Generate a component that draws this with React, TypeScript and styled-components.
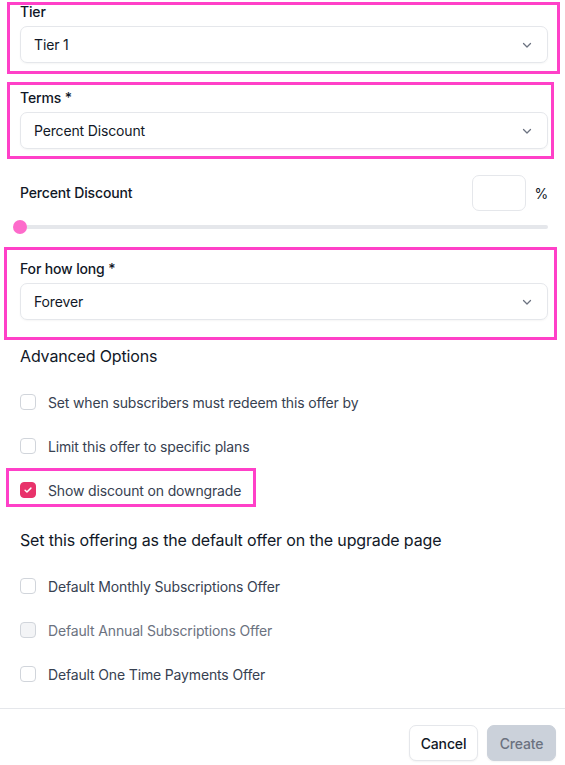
import React from 'react';
import styled, { createGlobalStyle } from 'styled-components';

const GlobalStyle = createGlobalStyle`
  body {
    margin: 0;
    background: #ffffff;
    font-family: Inter, "Noto Sans", sans-serif;
    letter-spacing: -0.15px;
    color: #111827;
  }
`;

const Page = styled.div`
  position: relative;
  width: 565px;
  height: 765px;
  overflow: hidden;
`;

const Body = styled.div`
  padding: 2px 17px 0 20px;
  display: flex;
  flex-direction: column;
`;

const Field = styled.div<{ $mt?: number }>`
  display: flex;
  flex-direction: column;
  gap: 4px;
  margin-top: ${(p) => p.$mt ?? 0}px;
`;

const Label = styled.label`
  font-size: 14px;
  line-height: 20px;
  font-weight: 500;
  color: #111827;
`;

const SelectBox = styled.div`
  height: 37px;
  box-sizing: border-box;
  border: 1px solid #e5e7eb;
  border-radius: 7px;
  box-shadow: 0 1px 2px rgba(0, 0, 0, 0.04);
  display: flex;
  align-items: center;
  justify-content: space-between;
  padding: 0 14px 0 13px;
  font-size: 14px;
  color: #111827;
`;

const PercentRow = styled.div`
  margin-top: 26px;
  display: flex;
  align-items: center;
  justify-content: space-between;
`;

const PercentInputWrap = styled.div`
  display: flex;
  align-items: center;
  gap: 8px;
  font-size: 14px;
  color: #111827;
`;

const SmallInput = styled.div`
  width: 54px;
  height: 36px;
  box-sizing: border-box;
  border: 1px solid #e5e7eb;
  border-radius: 7px;
`;

const SliderTrack = styled.div`
  position: relative;
  margin-top: 9px;
  height: 14px;
  display: flex;
  align-items: center;
  &::before {
    content: '';
    flex: 1;
    height: 4px;
    border-radius: 2px;
    background: #e5e7eb;
  }
`;

const Thumb = styled.span`
  position: absolute;
  left: -7px;
  top: 0;
  width: 14px;
  height: 14px;
  border-radius: 50%;
  background: #fd6bcb;
`;

const SectionTitle = styled.div<{ $mt: number }>`
  margin-top: ${(p) => p.$mt}px;
  font-size: 16px;
  line-height: 24px;
  color: #111827;
`;

const CheckList = styled.div`
  margin-top: 24px;
  display: flex;
  flex-direction: column;
  gap: 24px;
`;

const CheckRow = styled.div<{ $disabled?: boolean }>`
  display: flex;
  align-items: center;
  gap: 12px;
  height: 20px;
  font-size: 14px;
  color: ${(p) => (p.$disabled ? '#6b7280' : '#374151')};
`;

const Box = styled.span<{ $checked?: boolean; $disabled?: boolean }>`
  width: 16px;
  height: 16px;
  box-sizing: border-box;
  border-radius: 4px;
  border: 1px solid ${(p) => (p.$checked ? '#e8336b' : '#d1d5db')};
  background: ${(p) => (p.$checked ? '#e8336b' : p.$disabled ? '#f3f4f6' : '#ffffff')};
  display: flex;
  align-items: center;
  justify-content: center;
`;

const Footer = styled.div`
  margin-top: 24px;
  border-top: 1px solid #e5e7eb;
  padding: 16px 9px 0 0;
  display: flex;
  justify-content: flex-end;
  gap: 9px;
`;

const Button = styled.button<{ $primary?: boolean }>`
  height: 36px;
  padding: 0 10px;
  min-width: 69px;
  border-radius: 7px;
  font-family: inherit;
  letter-spacing: inherit;
  font-size: 14px;
  font-weight: 500;
  border: 1px solid ${(p) => (p.$primary ? '#cbd1da' : '#e5e7eb')};
  background: ${(p) => (p.$primary ? '#cbd1da' : '#ffffff')};
  color: ${(p) => (p.$primary ? '#6b7280' : '#111827')};
  box-shadow: 0 1px 2px rgba(0, 0, 0, 0.05);
`;

const Highlight = styled.div`
  position: absolute;
  border: 3px solid #ff40c8;
  box-sizing: border-box;
  pointer-events: none;
`;

const Chevron = () => (
  <svg width="12" height="12" viewBox="0 0 24 24" fill="none" stroke="#6b7280" strokeWidth="2.5" strokeLinecap="round" strokeLinejoin="round">
    <path d="M5 9l7 7 7-7" />
  </svg>
);

const Tick = () => (
  <svg width="10" height="10" viewBox="0 0 24 24" fill="none" stroke="#ffffff" strokeWidth="3.5" strokeLinecap="round" strokeLinejoin="round">
    <path d="M5 12.5l4.5 4.5L19 7.5" />
  </svg>
);

const Select = ({ value }: { value: string }) => (
  <SelectBox>
    <span>{value}</span>
    <Chevron />
  </SelectBox>
);

interface CheckProps {
  label: string;
  checked?: boolean;
  disabled?: boolean;
}

const Check = ({ label, checked, disabled }: CheckProps) => (
  <CheckRow $disabled={disabled}>
    <Box $checked={checked} $disabled={disabled}>{checked && <Tick />}</Box>
    <span>{label}</span>
  </CheckRow>
);

const highlights = [
  { left: 7, top: 2, width: 553, height: 72 },
  { left: 7, top: 82, width: 547, height: 77 },
  { left: 4, top: 247, width: 553, height: 93 },
  { left: 6, top: 468, width: 250, height: 39 },
];

export default function App() {
  return (
    <Page>
      <GlobalStyle />
      <Body>
        <Field>
          <Label>Tier</Label>
          <Select value="Tier 1" />
        </Field>
        <Field $mt={25}>
          <Label>Terms *</Label>
          <Select value="Percent Discount" />
        </Field>
        <PercentRow>
          <Label>Percent Discount</Label>
          <PercentInputWrap>
            <SmallInput />
            <span>%</span>
          </PercentInputWrap>
        </PercentRow>
        <SliderTrack>
          <Thumb />
        </SliderTrack>
        <Field $mt={25}>
          <Label>For how long *</Label>
          <Select value="Forever" />
        </Field>

        <SectionTitle $mt={24}>Advanced Options</SectionTitle>
        <CheckList>
          <Check label="Set when subscribers must redeem this offer by" />
          <Check label="Limit this offer to specific plans" />
          <Check label="Show discount on downgrade" checked />
        </CheckList>

        <SectionTitle $mt={28}>Set this offering as the default offer on the upgrade page</SectionTitle>
        <CheckList>
          <Check label="Default Monthly Subscriptions Offer" />
          <Check label="Default Annual Subscriptions Offer" disabled />
          <Check label="Default One Time Payments Offer" />
        </CheckList>
      </Body>
      <Footer>
        <Button>Cancel</Button>
        <Button $primary>Create</Button>
      </Footer>
      {highlights.map((h, i) => (
        <Highlight key={i} style={{ left: h.left, top: h.top, width: h.width, height: h.height }} />
      ))}
    </Page>
  );
}
